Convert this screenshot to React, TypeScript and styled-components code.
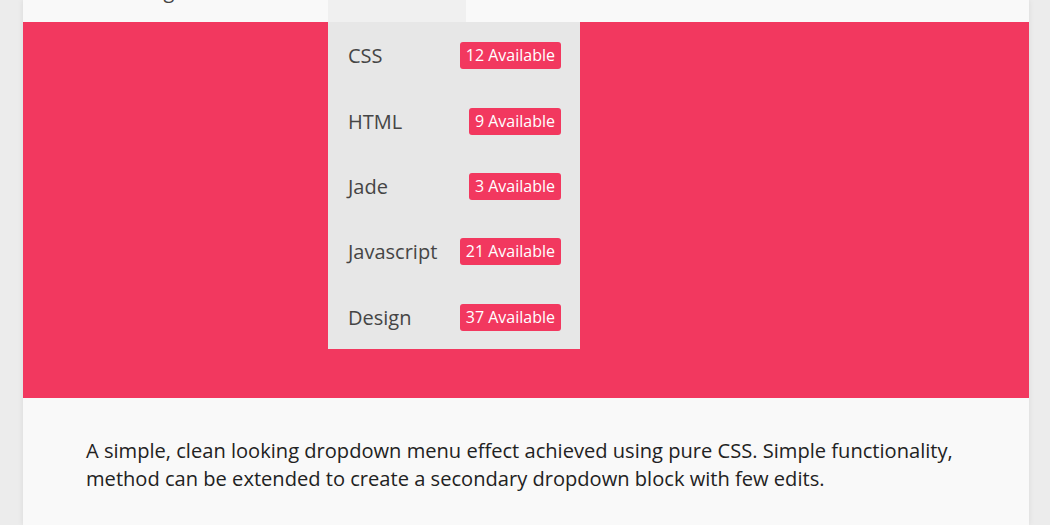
import React from "react";
import styled, { createGlobalStyle } from "styled-components";

const Global = createGlobalStyle`
  html, body {
    margin: 0;
    padding: 0;
    background: #ececec;
    font-family: "Open Sans", "Noto Sans", sans-serif;
    overflow: hidden;
  }
`;

const Page = styled.div`
  height: 525px;
  overflow: hidden;
`;

const Card = styled.main`
  margin-left: 23px;
  width: 1006px;
  min-height: 525px;
  background: #f9f9f9;
  box-shadow: 0 0 6px rgba(0, 0, 0, 0.08);
`;

const Header = styled.header`
  position: relative;
  height: 22px;
  display: flex;
  align-items: flex-end;
  z-index: 2;
`;

const NavItem = styled.div<{ $active?: boolean; $width: number }>`
  position: relative;
  width: ${(p) => p.$width}px;
  height: 22px;
  background: ${(p) => (p.$active ? "#f0f0f0" : "transparent")};
  display: flex;
  align-items: flex-end;
  overflow: visible;
`;

const NavClip = styled.div`
  height: 22px;
  width: 100%;
  overflow: hidden;
  display: flex;
  align-items: flex-end;
`;

const NavLabel = styled.span<{ $indent: number }>`
  margin-left: ${(p) => p.$indent}px;
  margin-bottom: 21px;
  font-size: 20px;
  line-height: 20px;
  color: #444;
  white-space: nowrap;
`;

const Dropdown = styled.ul`
  position: absolute;
  top: 22px;
  left: 0;
  width: 252px;
  height: 327px;
  margin: 0;
  padding: 1px 0 0;
  box-sizing: border-box;
  list-style: none;
  background: #e7e7e7;
`;

const Row = styled.li`
  height: 65.4px;
  display: flex;
  align-items: center;
  justify-content: space-between;
  padding: 0 19px 0 20px;
  box-sizing: border-box;
`;

const ItemName = styled.span`
  font-size: 20px;
  color: #454545;
`;

const Badge = styled.span`
  background: #f2385f;
  color: #fff;
  font-size: 16px;
  line-height: 27px;
  height: 27px;
  padding: 0 6px;
  border-radius: 3px;
`;

const Banner = styled.section`
  height: 376px;
  background: #f2385f;
`;

const Description = styled.p`
  margin: 0;
  padding: 39px 63px 0;
  font-size: 20.1px;
  line-height: 28px;
  color: #222;
`;

const topics = [
  { name: "CSS", count: 12 },
  { name: "HTML", count: 9 },
  { name: "Jade", count: 3 },
  { name: "Javascript", count: 21 },
  { name: "Design", count: 37 },
];

export default function App() {
  return (
    <Page>
      <Global />
      <Card>
        <Header>
          <NavItem $width={305}>
            <NavClip>
              <NavLabel $indent={53}>Web Design</NavLabel>
            </NavClip>
          </NavItem>
          <NavItem $width={138} $active>
            <NavClip>
              <NavLabel $indent={20}>Menu</NavLabel>
            </NavClip>
            <Dropdown>
              {topics.map((t) => (
                <Row key={t.name}>
                  <ItemName>{t.name}</ItemName>
                  <Badge>{t.count} Available</Badge>
                </Row>
              ))}
            </Dropdown>
          </NavItem>
        </Header>
        <Banner />
        <Description>
          A simple, clean looking dropdown menu effect achieved using pure CSS.
          Simple functionality, method can be extended to create a secondary
          dropdown block with few edits.
        </Description>
      </Card>
    </Page>
  );
}
